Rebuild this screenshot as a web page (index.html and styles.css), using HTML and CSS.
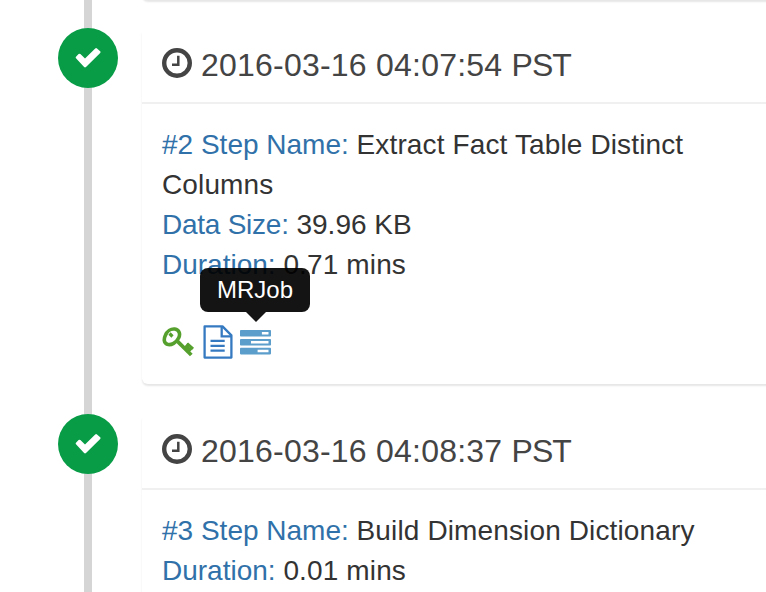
FILE: index.html
```
<!DOCTYPE html>
<html lang="en">
<head>
<meta charset="utf-8">
<title>Job steps</title>
<link rel="stylesheet" href="styles.css">
</head>
<body>
<svg class="defs" aria-hidden="true">
  <symbol id="check" viewBox="0 0 28 22"><path d="M2 11.3Q1.2 10.5 2 9.7L4.6 7.1Q5.5 6.3 6.4 7.1L11 11.6 21.2 1.4Q22.1.6 23 1.4L26.2 4.2Q27 5 26.2 5.9L12 20Q11 20.8 10.1 20Z" fill="#fff"/></symbol>
  <symbol id="clock" viewBox="0 0 30 30"><circle cx="15" cy="15" r="12.8" fill="none" stroke="#444" stroke-width="4.4"/><path d="M16.3 7.8v8.9h-6.3" fill="none" stroke="#444" stroke-width="2.5"/></symbol>
</svg>
<main class="timeline">
  <article class="card previous"></article>
  <section class="step">
    <span class="badge"><svg class="check"><use href="#check"/></svg></span>
    <article class="card">
      <header class="head"><svg class="clock"><use href="#clock"/></svg><span class="time">2016-03-16 04:07:54 <span class="zone">PST</span></span></header>
      <div class="body">
        <div class="row"><span class="label">#2 Step Name:</span> <span class="value">Extract Fact Table Distinct<br>Columns</span></div>
        <div class="row"><span class="label size">Data Size:</span> 39.96 KB</div>
        <div class="row"><span class="label">Duration:</span> <span class="value">0.71 mins</span></div>
        <div class="actions">
          <svg class="key" viewBox="0 0 32 30"><g fill="none" stroke="#56a02e"><path stroke-width="3.6" d="M3.3 8.5C5 4.2 9 1.5 12.8 2 17.4 2.7 18.6 7.2 16.6 11 14.4 15.6 9.3 18.5 5.3 17.3 1.7 16 1.7 12 3.3 8.5Z"/><path stroke-width="3.2" d="m7.5 6.5 3 3"/><path stroke-width="3.8" d="M14.8 13.6 29.3 28"/><path stroke-width="3.2" d="m22.8 21.6 4-4.4M26 24.6l4.3-4.6"/><path stroke-width="2.6" d="m25.2 16.4 5.9 5.4"/></g><path fill="#56a02e" d="m22 20 3-2.5 4 4-3 2.5Z"/></svg>
          <svg class="doc" viewBox="0 0 30 34"><g fill="none" stroke="#357ac1" stroke-width="2.3"><path stroke-linejoin="round" d="M1.6 1.4h17.9l8.9 9v22.2H1.6Z"/><path d="M18.7 2v9.3h9.3"/><path stroke-width="2.2" d="M7.5 15.9h14.2M7.5 20.9h14.2M7.5 25.7h14.2"/></g></svg>
          <span class="tasks">
            <svg viewBox="0 0 31 25"><g fill="#5b9dcb"><rect width="31" height="6.6" rx=".8"/><rect y="8.9" width="31" height="6.6" rx=".8"/><rect y="17.8" width="31" height="6.6" rx=".8"/></g><path fill="#fff" d="M21.9 2h6.6v2.5h-6.6zM11 10.9h17.5v2.5H11zM17.6 19.8h10.9v2.5H17.6z"/></svg>
            <span class="tooltip">MRJob</span>
          </span>
        </div>
      </div>
    </article>
  </section>
  <section class="step">
    <span class="badge"><svg class="check"><use href="#check"/></svg></span>
    <article class="card">
      <header class="head"><svg class="clock"><use href="#clock"/></svg><span class="time">2016-03-16 04:08:37 <span class="zone">PST</span></span></header>
      <div class="body">
        <div class="row"><span class="label">#3 Step Name:</span> <span class="value">Build Dimension Dictionary</span></div>
        <div class="row"><span class="label">Duration:</span> <span class="value">0.01 mins</span></div>
      </div>
    </article>
  </section>
</main>
</body>
</html>
```
FILE: styles.css
```
* { box-sizing: border-box; }
html, body { margin: 0; height: 592px; overflow: hidden; background: #fff; }
body { font: 28px/40px "Liberation Sans", Arial, sans-serif; color: #333; }
svg { display: block; flex: none; }
.defs { display: none; }
.timeline {
  height: 592px;
  overflow: hidden;
  background: linear-gradient(#d5d5d5, #d5d5d5) 84px 0 / 8px 100% no-repeat;
}
.card {
  flex: none;
  width: 660px;
  background: #fff;
  border-radius: 6px;
  box-shadow: 0 2px 2px rgba(0, 0, 0, .1);
}
.previous { height: 20px; margin: -20px 0 28px 142px; }
.step { display: flex; align-items: flex-start; padding-left: 58px; margin-bottom: 30px; }
.badge {
  flex: none;
  display: grid;
  place-items: center;
  width: 60px;
  height: 60px;
  margin-right: 24px;
  border-radius: 50%;
  background: #089c47;
}
.check { width: 28px; height: 22px; }
.head {
  display: flex;
  align-items: center;
  gap: 9px;
  height: 76px;
  padding: 0 20px 4px;
  border-bottom: 2px solid #f0f0f0;
  font-size: 32px;
  color: #444;
}
.clock { width: 30px; height: 30px; }
.time { padding-top: 3px; letter-spacing: .22px; }
.zone { letter-spacing: -.9px; }
.body { height: 280px; padding: 21px 20px 0; }
.row { white-space: nowrap; }
.label { color: #3071a9; }
.size { letter-spacing: -.25px; }
.value { letter-spacing: .13px; }
.actions { display: flex; align-items: center; height: 34px; margin-top: 40px; }
.key { width: 32px; height: 30px; margin-right: 9px; }
.doc { width: 30px; height: 34px; margin-right: 7px; }
.tasks { position: relative; width: 31px; }
.tasks svg { width: 31px; height: 25px; }
.tooltip {
  position: absolute;
  left: -40px;
  bottom: 43px;
  width: 110px;
  height: 44px;
  border-radius: 8px;
  background: rgba(0, 0, 0, .92);
  color: #fff;
  font-size: 24px;
  line-height: 44px;
  text-align: center;
}
.tooltip::after {
  content: "";
  position: absolute;
  top: 44px;
  left: 46px;
  border: 10px solid transparent;
  border-top-color: rgba(0, 0, 0, .92);
  border-bottom: 0;
}
```
